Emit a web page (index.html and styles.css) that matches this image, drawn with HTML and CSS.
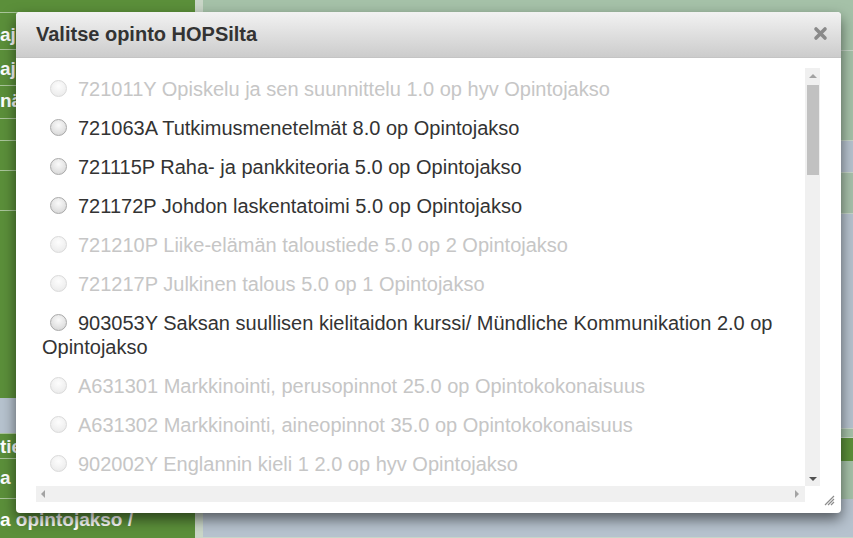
FILE: index.html
```html
<!DOCTYPE html>
<html lang="fi">
<head>
    <meta charset="UTF-8">
    <meta name="viewport" content="width=device-width, initial-scale=1.0">
    <title>Valitse opinto HOPSilta</title>
    <link rel="stylesheet" href="styles.css">
</head>
<body>

<div class="page">
    <div class="sidebar">
        <div class="side-row r0"></div>
        <div class="side-row r1">aj</div>
        <div class="side-row r2">aj</div>
        <div class="side-row r3">nä</div>
        <div class="side-row r4"></div>
        <div class="side-row r5"></div>
        <div class="side-row r6"></div>
        <div class="side-row r7"></div>
        <div class="side-row r8 muted"></div>
        <div class="side-row r9">tie</div>
        <div class="side-row r10">a</div>
        <div class="side-row r11">a opintojakso /</div>
    </div>
    <div class="main">
        <div class="band b1"></div>
        <div class="band b2"></div>
        <div class="band b3"></div>
        <div class="band b4"></div>
        <div class="band b5"></div>
        <div class="band b6"></div>
        <div class="band b7"></div>
        <div class="band b8"></div>
    </div>
</div>

<div class="dialog">
    <div class="dialog-header">
        <span class="dialog-title">Valitse opinto HOPSilta</span>
        <span class="dialog-close">
            <svg width="15" height="15" viewBox="0 0 15 15">
                <path d="M3 3 L12 12 M12 3 L3 12" stroke="#8a8a8a" stroke-width="3.6" stroke-linecap="round"/>
            </svg>
        </span>
    </div>
    <div class="dialog-body">
        <div class="scroll-box">
            <div class="scroll-content">
                <label class="option disabled"><span class="radio"></span>721011Y Opiskelu ja sen suunnittelu 1.0 op hyv Opintojakso</label>
                <label class="option"><span class="radio"></span>721063A Tutkimusmenetelmät 8.0 op Opintojakso</label>
                <label class="option"><span class="radio"></span>721115P Raha- ja pankkiteoria 5.0 op Opintojakso</label>
                <label class="option"><span class="radio"></span>721172P Johdon laskentatoimi 5.0 op Opintojakso</label>
                <label class="option disabled"><span class="radio"></span>721210P Liike-elämän taloustiede 5.0 op 2 Opintojakso</label>
                <label class="option disabled"><span class="radio"></span>721217P Julkinen talous 5.0 op 1 Opintojakso</label>
                <label class="option"><span class="radio"></span>903053Y Saksan suullisen kielitaidon kurssi/ Mündliche Kommunikation 2.0 op Opintojakso</label>
                <label class="option disabled"><span class="radio"></span>A631301 Markkinointi, perusopinnot 25.0 op Opintokokonaisuus</label>
                <label class="option disabled"><span class="radio"></span>A631302 Markkinointi, aineopinnot 35.0 op Opintokokonaisuus</label>
                <label class="option disabled"><span class="radio"></span>902002Y Englannin kieli 1 2.0 op hyv Opintojakso</label>
            </div>
            <div class="vscroll">
                <span class="arrow up"></span>
                <span class="thumb"></span>
                <span class="track"></span>
                <span class="arrow down"></span>
            </div>
            <div class="hscroll">
                <span class="arrow left"></span>
                <span class="track"></span>
                <span class="arrow right"></span>
            </div>
            <div class="corner"></div>
        </div>
        <div class="grip">
            <svg width="12" height="12" viewBox="0 0 12 12">
                <path d="M11 2 L2 11 M11 5 L5 11 M11 8 L8 11" stroke="#8c8c8c" stroke-width="1.2"/>
            </svg>
        </div>
    </div>
</div>

</body>
</html>
```

FILE: styles.css
```css
body {
    margin: 0;
    font-family: "Liberation Sans", Arial, sans-serif;
    overflow: hidden;
}
.page {
    display: flex;
    width: 853px;
    height: 538px;
    overflow: hidden;
}
.sidebar {
    width: 195px;
    background-color: #5b8f3a;
    border-right: 8px solid #c9d6c7;
    display: flex;
    flex-direction: column;
}
.side-row {
    color: #fff;
    font-weight: bold;
    font-size: 19px;
    border-bottom: 1px solid #a9c59a;
    line-height: 20px;
    box-sizing: border-box;
    overflow: hidden;
    white-space: nowrap;
}
.r0 { height: 13px; }
.r1 { height: 37px; padding-top: 12px; }
.r2 { height: 36px; padding-top: 9px; }
.r3 { height: 33px; padding-top: 5px; }
.r4 { height: 22px; }
.r5 { height: 30px; }
.r6 { height: 40px; }
.r7 { height: 187px; border-bottom: none; }
.r8 { height: 36px; }
.muted { background-color: #b6c2ce; }
.r9 { height: 25px; padding-top: 3px; }
.r10 { height: 40px; padding-top: 9px; }
.r11 { flex: 1; padding-top: 11px; border-bottom: none; }
.main {
    flex: 1;
    display: flex;
    flex-direction: column;
}
.band {
    border-bottom: 1px solid #c6d5c8;
}
.b1 { height: 50px; background-color: #a5c1a8; }
.b2 { height: 89px; background-color: #a5c1a8; }
.b3 { height: 31px; background-color: #b6c2ce; }
.b4 { height: 40px; background-color: #a7c0aa; }
.b5 { height: 214px; background-color: #b6c2ce; }
.b6 { height: 8px; background-color: #a5c1a8; }
.b7 { height: 23px; background-color: #5b8f3a; border-bottom: none; }
.b8 { flex: 1; background: linear-gradient(#a5c1a8 0, #a5c1a8 38px, #b6c2ce 38px); }

.dialog {
    position: absolute;
    left: 16px;
    top: 12px;
    width: 825px;
    height: 501px;
    background-color: #fff;
    border-radius: 4px;
    box-shadow: 0 6px 14px rgba(0, 0, 0, 0.55);
    display: flex;
    flex-direction: column;
    overflow: hidden;
}
.dialog-header {
    flex-shrink: 0;
    height: 46px;
    background: linear-gradient(#f2f2f2, #cccccc);
    display: flex;
    align-items: center;
    justify-content: space-between;
    padding: 0 13px 0 20px;
    box-sizing: border-box;
    border-bottom: 1px solid #c4c4c4;
}
.dialog-title {
    font-size: 20px;
    font-weight: bold;
    color: #333;
}
.dialog-close {
    display: flex;
    margin-top: -2px;
}
.dialog-body {
    flex: 1;
    min-height: 0;
    display: flex;
    padding: 10px 0 11px 20px;
    box-sizing: border-box;
    position: relative;
}
.scroll-box {
    width: 784px;
    display: grid;
    grid-template-columns: minmax(0, 1fr) 15px;
    grid-template-rows: minmax(0, 1fr) 16px;
}
.scroll-content {
    overflow: hidden;
    min-height: 0;
    padding: 9px 0 0 6px;
}
.option {
    display: block;
    font-size: 20px;
    line-height: 24px;
    color: #333;
    margin-bottom: 15px;
}
.option.disabled {
    color: #c6c6c6;
}
.radio {
    display: inline-block;
    width: 15px;
    height: 15px;
    border-radius: 50%;
    border: 1px solid #a9a9a9;
    background: radial-gradient(circle at 50% 35%, #fafafa 0, #e4e4e4 55%, #cfcfcf 100%);
    vertical-align: -1px;
    margin: 0 11px 0 8px;
}
.disabled .radio {
    border-color: #dadada;
    background: radial-gradient(circle at 50% 35%, #fdfdfd 0, #f0f0f0 60%, #e6e6e6 100%);
}
.vscroll {
    background-color: #f0f0f0;
    display: flex;
    flex-direction: column;
    align-items: center;
    min-height: 0;
}
.vscroll .thumb {
    width: 12px;
    height: 90px;
    background-color: #c1c1c1;
}
.vscroll .track,
.hscroll .track {
    flex: 1;
}
.arrow {
    width: 0;
    height: 0;
}
.arrow.up {
    border-left: 4px solid transparent;
    border-right: 4px solid transparent;
    border-bottom: 4px solid #a3a3a3;
    margin: 6px 0 7px;
}
.arrow.down {
    border-left: 4px solid transparent;
    border-right: 4px solid transparent;
    border-top: 4px solid #505050;
    margin: 3px 0 5px;
}
.hscroll {
    background-color: #f0f0f0;
    display: flex;
    align-items: center;
}
.arrow.left {
    border-top: 4px solid transparent;
    border-bottom: 4px solid transparent;
    border-right: 4px solid #a3a3a3;
    margin: 0 0 0 5px;
}
.arrow.right {
    border-top: 4px solid transparent;
    border-bottom: 4px solid transparent;
    border-left: 4px solid #a3a3a3;
    margin: 0 6px 0 0;
}
.corner {
    background-color: #fff;
}
.grip {
    position: absolute;
    right: 6px;
    bottom: 7px;
    display: flex;
}
```
